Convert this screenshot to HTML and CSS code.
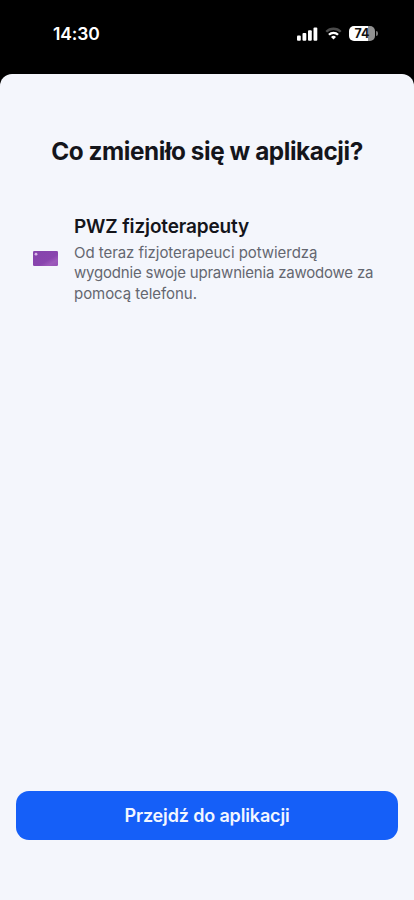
FILE: index.html
```html
<!DOCTYPE html>
<html lang="pl">
<head>
<meta charset="utf-8">
<meta name="viewport" content="width=device-width, initial-scale=1">
<title>Co zmieniło się w aplikacji?</title>
<link rel="stylesheet" href="styles.css">
</head>
<body>
<div class="screen">
  <header class="status">
    <span class="time">14:30</span>
    <div class="indicators">
      <svg class="signal" width="21" height="14" viewBox="0 0 21 14" fill="#fff">
        <rect x="0" y="8.5" width="3.8" height="5.2" rx="1"/>
        <rect x="5.5" y="6" width="3.8" height="7.7" rx="1"/>
        <rect x="11" y="3.3" width="3.8" height="10.4" rx="1"/>
        <rect x="16.5" y="0.4" width="3.8" height="13.3" rx="1"/>
      </svg>
      <svg class="wifi" width="17" height="13" viewBox="0 0 18 14" fill="none" stroke-width="2.5">
        <path d="M1.2 5.1a11 11 0 0 1 15.6 0" stroke="#4b4b4b"/>
        <path d="M4.1 8.3a7 7 0 0 1 9.8 0" stroke="#fff"/>
        <path d="M9 13.4 6.3 10.7a3.8 3.8 0 0 1 5.4 0Z" fill="#fff"/>
      </svg>
      <div class="battery"><span class="level">74</span><span class="tip"></span></div>
    </div>
  </header>
  <main class="sheet">
    <h1 class="title">Co zmieniło się w aplikacji?</h1>
    <section class="item">
      <svg class="card" width="25" height="15" viewBox="0 0 25 15">
        <defs>
          <linearGradient id="card-fill" x1="0" y1="0" x2="1" y2="1">
            <stop offset="0" stop-color="#8543ad"/>
            <stop offset=".6" stop-color="#8945ae"/>
            <stop offset=".78" stop-color="#9d5abb"/>
            <stop offset="1" stop-color="#9450b5"/>
          </linearGradient>
        </defs>
        <rect width="25" height="15" rx="1.3" fill="url(#card-fill)"/>
        <circle cx="3" cy="3.2" r="1.4" fill="#d9b9e7"/>
      </svg>
      <div class="copy">
        <h2 class="name">PWZ fizjoterapeuty</h2>
        <p class="text">Od teraz fizjoterapeuci potwierdzą<br><span class="tight">wygodnie swoje uprawnienia zawodowe za</span><br>pomocą telefonu.</p>
      </div>
    </section>
    <button class="action" type="button">Przejdź do aplikacji</button>
  </main>
</div>
</body>
</html>
```
FILE: styles.css
```css
* { box-sizing: border-box; }

body {
  margin: 0;
  background: #000;
  font-family: Inter, "Liberation Sans", sans-serif;
}

.screen {
  display: flex;
  flex-direction: column;
  width: 414px;
  height: 900px;
}

.status {
  display: flex;
  justify-content: space-between;
  height: 74px;
  padding: 23px 36.5px 0 53px;
}

.time {
  color: #fff;
  font-size: 17.5px;
  font-weight: 600;
  line-height: 22px;
  letter-spacing: -0.1px;
}

.indicators {
  display: flex;
  align-items: center;
  height: 21px;
}

.wifi { margin: 0 7.5px 0 7px; }

.battery {
  display: flex;
  align-items: center;
  gap: 1px;
}

.level {
  width: 26px;
  height: 15px;
  border-radius: 5px;
  background: linear-gradient(90deg, #fff 74%, #929292 74%);
  color: #111;
  font-size: 12.5px;
  font-weight: 700;
  line-height: 15px;
  text-align: center;
}

.tip {
  width: 1.5px;
  height: 5px;
  border-radius: 0 2px 2px 0;
  background: #777;
}

.sheet {
  display: flex;
  flex: 1;
  flex-direction: column;
  padding: 61px 16px 60px;
  border-radius: 12px 12px 0 0;
  background: #f4f6fc;
}

.title {
  margin: 0;
  color: #14151b;
  font-size: 24.3px;
  font-weight: 700;
  line-height: 32px;
  letter-spacing: -0.42px;
  text-align: center;
  white-space: nowrap;
}

.item {
  display: flex;
  gap: 16px;
  margin-top: 48px;
  padding-left: 17px;
}

.card {
  flex: none;
  margin-top: 36px;
}

.name {
  margin: 0;
  color: #14151b;
  font-size: 19px;
  font-weight: 600;
  line-height: 24px;
  letter-spacing: -0.14px;
  white-space: nowrap;
}

.text {
  margin: 3.5px 0 0;
  color: #646770;
  font-size: 15px;
  line-height: 20.5px;
  letter-spacing: -0.05px;
  white-space: nowrap;
}

.tight { letter-spacing: -0.2px; }

.action {
  height: 49px;
  margin-top: auto;
  padding: 0;
  border: 0;
  border-radius: 13px;
  background: #155ff8;
  color: #f2f6ff;
  font-family: inherit;
  font-size: 18px;
  font-weight: 600;
  letter-spacing: -0.15px;
}
```
